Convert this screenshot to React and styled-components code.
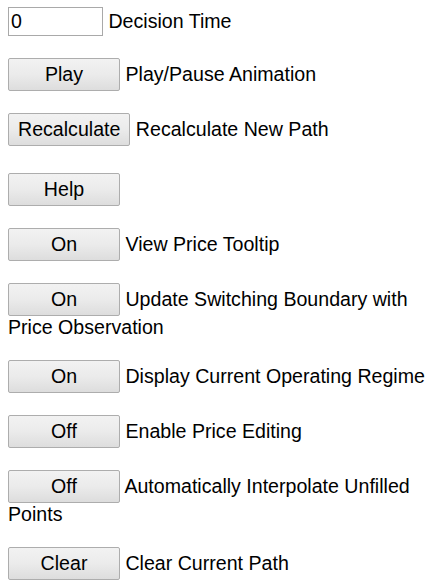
import React from "react";
import styled, { createGlobalStyle } from "styled-components";

const Global = createGlobalStyle`
  html, body { margin: 0; padding: 0; background: #fff; }
  body {
    font-family: "Liberation Sans", Arial, sans-serif;
    font-size: 19.6px;
    color: #000;
  }
`;

const Page = styled.div`
  padding: 7px 8px 8px 8px;
  line-height: 22px;
`;

const Row = styled.p`
  margin: ${(p) => (p.$first ? "0" : p.$extra ? "27px" : "22px")} 0 0 0;
  line-height: 22px;
`;

const TimeInput = styled.input`
  box-sizing: border-box;
  width: 95px;
  height: 29px;
  margin: 0;
  padding: 1px 2px;
  border: 1px solid #a9a9a9;
  border-radius: 0;
  font: inherit;
  font-size: 19.6px;
  line-height: 22px;
  color: #000;
  background: #fff;
  vertical-align: baseline;
  outline: none;
`;

const Btn = styled.button`
  box-sizing: border-box;
  min-width: 112px;
  height: 33px;
  margin: 0;
  padding: 4px 9px 5px 9px;
  border: 1px solid #adadad;
  border-radius: 2px;
  background: linear-gradient(to bottom, #f2f2f2 0%, #ebebeb 50%, #dddddd 100%);
  font: inherit;
  font-size: 19.6px;
  line-height: 22px;
  color: #000;
  vertical-align: baseline;
  cursor: pointer;
`;

const rows = [
  { btn: "Play", label: "Play/Pause Animation" },
  { btn: "Recalculate", label: "Recalculate New Path" },
  { btn: "Help", label: "", extra: true },
  { btn: "On", label: "View Price Tooltip" },
  { btn: "On", label: "Update Switching Boundary with Price Observation" },
  { btn: "On", label: "Display Current Operating Regime" },
  { btn: "Off", label: "Enable Price Editing" },
  { btn: "Off", label: "Automatically Interpolate Unfilled Points" },
  { btn: "Clear", label: "Clear Current Path" },
];

export default function App() {
  return (
    <>
      <Global />
      <Page>
        <Row $first>
          <TimeInput type="text" defaultValue="0" /> Decision Time
        </Row>
        {rows.map((r, i) => (
          <Row key={i} $extra={r.extra}>
            <Btn type="button">{r.btn}</Btn> {r.label}
          </Row>
        ))}
      </Page>
    </>
  );
}
